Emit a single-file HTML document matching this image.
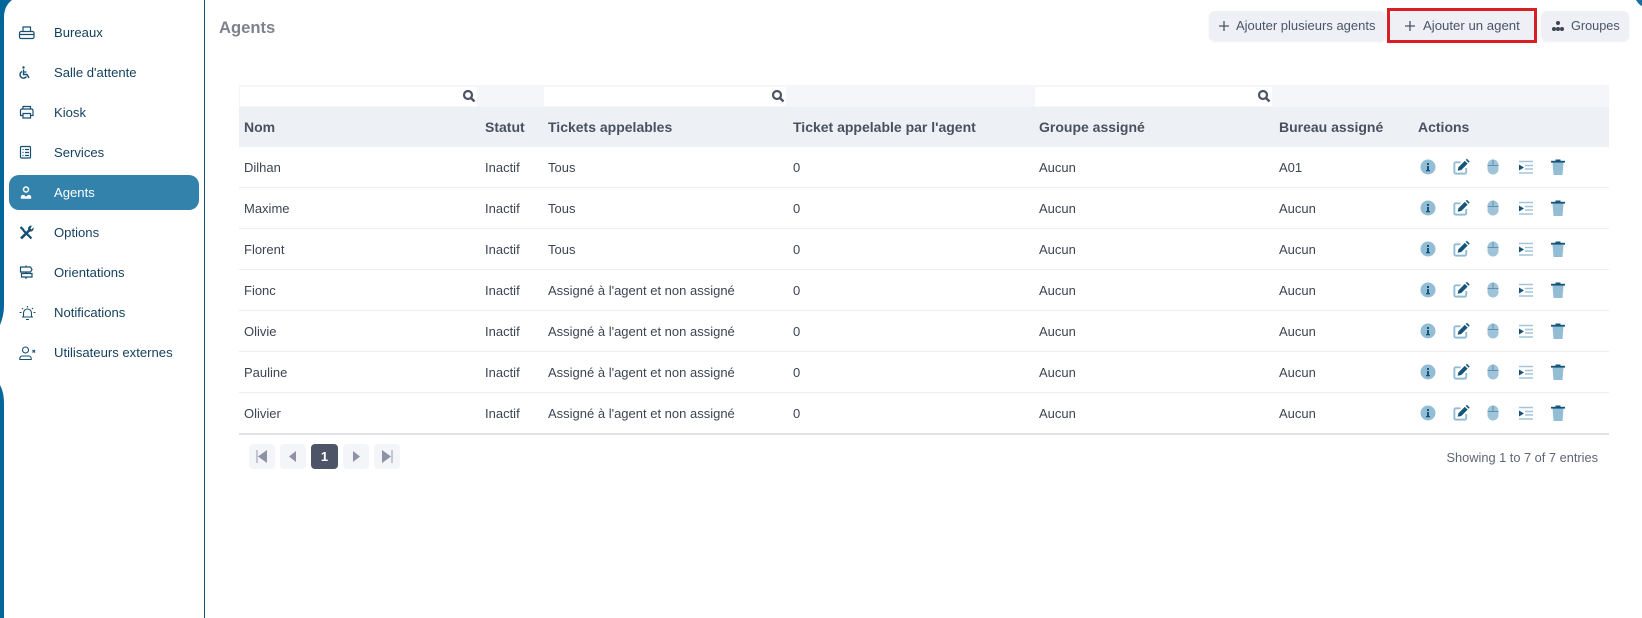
<!DOCTYPE html>
<html lang="fr">
<head>
<meta charset="utf-8">
<title>Agents</title>
<style>
html,body{margin:0;padding:0;background:#fff;}
body{width:1642px;height:618px;position:relative;overflow:hidden;font-family:"Liberation Sans",sans-serif;color:#33475b;}
.abs{position:absolute;}
.menu{position:absolute;left:54px;font-size:13.1px;line-height:16px;color:#123f5c;white-space:nowrap;}
.mi{position:absolute;left:18px;width:18px;height:18px;fill:none;stroke:#164f72;stroke-width:1.2;}
.btn{position:absolute;top:11px;height:30px;background:#eef0f5;border-radius:6px;font-size:13px;line-height:30px;color:#4b5468;white-space:nowrap;box-shadow:0 1px 2px rgba(60,70,90,.08);}
table{position:absolute;left:239px;top:107px;width:1370px;border-collapse:collapse;table-layout:fixed;font-size:13px;color:#3d4452;}
th{height:40px;background:#edf0f5;text-align:left;font-size:14px;font-weight:bold;color:#4a5060;padding:0 0 0 5px;white-space:nowrap;}
td{height:40px;border-bottom:1px solid #eceef1;padding:0 0 0 5px;white-space:nowrap;overflow:hidden;}
tr:last-child td{border-bottom:2px solid #dfe1e5;}
.ic{display:flex;gap:14.5px;align-items:center;padding-left:1px;height:22px;margin-top:-1px;}
.ic svg{width:18px;height:20px;flex:none;}
.pg{position:absolute;top:444px;width:26px;height:25px;background:#f4f5f9;border-radius:4px;}
.in{position:absolute;top:87px;height:19px;background:#fff;}
</style>
</head>
<body>
<svg width="0" height="0" style="position:absolute">
<defs>
<g id="i-info"><circle cx="9" cy="10" r="7.5" fill="#93bdd4"/><rect x="8" y="9" width="2" height="5" fill="#16557a"/><rect x="8" y="6" width="2" height="2" fill="#16557a"/><rect x="7" y="13" width="4" height="1.3" fill="#16557a"/></g>
<g id="i-edit"><path d="M9 5H4A1.500 1.500 0 0 0 2.500 6.500V15.500A1.500 1.500 0 0 0 4 17h9.500A1.500 1.500 0 0 0 15 15.500V11" fill="none" stroke="#93bdd4" stroke-width="2"/><path d="M6 14l.8-3.800L13.500 3.500l3 3L9.800 13.200z" fill="#16557a"/><path d="M14.500 2.500l1.200-1.200 3 3-1.200 1.200z" fill="#16557a"/></g>
<g id="i-mouse"><rect x="3.500" y="2.500" width="11" height="15" rx="5.500" fill="#9fc3d8"/><path d="M3.500 8.500h11M9 2.500v6" stroke="#5f93b2" stroke-width="1"/></g>
<g id="i-list"><path d="M2 4.500h14M8 8.500h8M8 12h8M2 16h14" stroke="#a3c6da" stroke-width="1.500"/><path d="M2 7.500l5 3-5 3z" fill="#16557a"/></g>
<g id="i-trash"><path d="M3.500 5.500h11l-1 12.500h-9z" fill="#93bdd4"/><rect x="2" y="3.800" width="14" height="1.800" fill="#16557a"/><rect x="6.500" y="2.500" width="5" height="1.500" fill="#16557a"/></g>
<g id="i-search"><circle cx="6" cy="6" r="4" fill="none" stroke="#4d5564" stroke-width="2.200"/><path d="M9 9l3.500 3.500" stroke="#4d5564" stroke-width="2.400"/></g>
</defs>
</svg>

<!-- left strip -->
<svg class="abs" style="left:0;top:0" width="14" height="420">
<path d="M0 0H12C7 4 4 9 4 18V305C4 314 2 320 0 325Z" fill="#04679c"/>
<path d="M0 385C3 391 4 396 4 405V420H0Z" fill="#04679c"/>
</svg>
<svg class="abs" style="left:0;top:420px" width="5" height="198"><rect width="4" height="198" fill="#04679c"/></svg>
<div class="abs" style="left:204px;top:0;width:1px;height:618px;background:#16506f"></div>
<svg class="abs" style="left:1630px;top:0" width="12" height="8"><path d="M6 0H12V6C9.500 5 8 3 6 0Z" fill="#1a6f9e"/></svg>

<!-- sidebar -->
<div class="abs" style="left:9px;top:175px;width:190px;height:35px;background:#3282ab;border-radius:10px"></div>

<svg class="mi" style="top:23px" viewBox="0 0 18 18"><path d="M5 8.500V4h7.500v4.500M1.500 11.500V10A1.500 1.500 0 0 1 3 8.500h11.500A1.500 1.500 0 0 1 16 10v1.500M1.500 11.500H16v2.500a1.500 1.500 0 0 1-1.500 1.500H3A1.500 1.500 0 0 1 1.500 14z"/></svg>
<div class="menu" style="top:25px">Bureaux</div>

<svg class="mi" style="top:63px" viewBox="0 0 18 18"><circle cx="5.500" cy="4.500" r="1.200" fill="#164f72" stroke="none"/><path d="M5.500 6.500v5h3.500l2 3.500M4 8.500a3.500 3.500 0 1 0 4.500 5" stroke-width="1.400"/><path d="M5.500 9h3" stroke-width="1.200"/></svg>
<div class="menu" style="top:65px">Salle d'attente</div>

<svg class="mi" style="top:103px" viewBox="0 0 18 18"><path d="M5 6V3.500h7.500V6M5 12.500H2.500V7.500A1.500 1.500 0 0 1 4 6h9.500A1.500 1.500 0 0 1 15 7.500v5h-2.500M5 10.500h7.500v4.500H5z"/></svg>
<div class="menu" style="top:105px">Kiosk</div>

<svg class="mi" style="top:143px" viewBox="0 0 18 18"><rect x="2.500" y="3.500" width="10" height="11.500" rx="1"/><path d="M4.500 6.500h1M7 6.500h4M4.500 9.500h1M7 9.500h4M4.500 12.500h1M7 12.500h4"/></svg>
<div class="menu" style="top:145px">Services</div>

<svg class="mi" style="top:184px;fill:#fff;stroke:#fff" viewBox="0 0 18 18"><circle cx="8" cy="5.500" r="2.500" fill="none" stroke-width="1.500"/><path d="M3 14.500v-1.500a1.800 1.800 0 0 1 1.800-1.800h1.200L8 13l2-1.800h1.200A1.800 1.800 0 0 1 13 13v1.500z" stroke-width=".5"/></svg>
<div class="menu" style="top:185px;color:#fff">Agents</div>

<svg class="mi" style="top:224px" viewBox="0 0 18 18"><path d="M2.500 3l2.500 2.500 1 1.500 7.500 7.500" stroke-width="2.200"/><path d="M13.500 2a2.800 2.800 0 0 0-3 3.800L2.500 13.500l1.500 1.500 7.800-7.800a2.800 2.800 0 0 0 3.500-3.200L13.500 6 12 4.500z" fill="#164f72" stroke-width=".6"/></svg>
<div class="menu" style="top:225px">Options</div>

<svg class="mi" style="top:264px" viewBox="0 0 18 18"><path d="M8 1.500V3M8 8v1.500M8 13v2M2.500 3h10l1.500 2.500L12.500 8h-10zM3.500 9.500h10.500V13H3.500z" stroke-width="1.200"/></svg>
<div class="menu" style="top:265px">Orientations</div>

<svg class="mi" style="top:304px;left:18px;width:19px" viewBox="0 0 19 18"><path d="M5.500 13V9a4 4 0 0 1 8 0v4M4 13h11M8 15.500h3M9.500 2v1.500M4 4l1 1M15 4l-1 1M1.500 8.500h2M15.500 8.500h2" stroke-width="1.100"/></svg>
<div class="menu" style="top:305px">Notifications</div>

<svg class="mi" style="top:344px;width:19px" viewBox="0 0 19 18"><circle cx="7.500" cy="6" r="3" stroke-width="1.100"/><path d="M1.800 15.500v-1a2.500 2.500 0 0 1 2.500-2.500h6.400a2.500 2.500 0 0 1 2.500 2.500v1z" stroke-width="1.100"/><path d="M14.500 6l2.500 2.500M17 6l-2.500 2.500" stroke-width="1.200"/></svg>
<div class="menu" style="top:345px">Utilisateurs externes</div>

<!-- header -->
<div class="abs" style="left:219px;top:17px;font-size:16.6px;line-height:21px;font-weight:bold;color:#7d828c">Agents</div>

<div class="btn" style="left:1209px;width:177px"><svg class="abs" style="left:9px;top:9px" width="12" height="12"><path d="M6 1v10M1 6h10" stroke="#4b5468" stroke-width="1.300"/></svg><span class="abs" style="left:27px">Ajouter plusieurs agents</span></div>
<div class="btn" style="left:1390px;width:144px"><svg class="abs" style="left:14px;top:9px" width="12" height="12"><path d="M6 1v10M1 6h10" stroke="#4b5468" stroke-width="1.300"/></svg><span class="abs" style="left:33px;font-size:13.2px">Ajouter un agent</span></div>
<div class="abs" style="left:1387px;top:8px;width:144px;height:29px;border:3px solid #d81f26"></div>
<div class="btn" style="left:1541px;width:88px"><svg class="abs" style="left:10px;top:8px" width="14" height="14" viewBox="0 0 14 14" fill="#3d4452"><circle cx="7" cy="4" r="2"/><circle cx="3" cy="10" r="2"/><circle cx="7" cy="10" r="2"/><circle cx="11" cy="10" r="2"/></svg><span class="abs" style="left:30px;font-size:12.7px">Groupes</span></div>

<!-- search row -->
<div class="abs" style="left:239px;top:85px;width:1370px;height:22px;background:#f5f6f9"></div>
<div class="in" style="left:240px;width:237px"></div>
<div class="in" style="left:544px;width:242px"></div>
<div class="in" style="left:1035px;width:237px"></div>
<svg class="abs" style="left:462px;top:89px" width="14" height="14"><use href="#i-search"/></svg>
<svg class="abs" style="left:771px;top:89px" width="14" height="14"><use href="#i-search"/></svg>
<svg class="abs" style="left:1257px;top:89px" width="14" height="14"><use href="#i-search"/></svg>

<table>
<colgroup><col style="width:241px"><col style="width:63px"><col style="width:245px"><col style="width:246px"><col style="width:240px"><col style="width:139px"><col style="width:196px"></colgroup>
<thead><tr><th>Nom</th><th>Statut</th><th>Tickets appelables</th><th>Ticket appelable par l'agent</th><th>Groupe assigné</th><th>Bureau assigné</th><th>Actions</th></tr></thead>
<tbody>
<tr><td>Dilhan</td><td>Inactif</td><td>Tous</td><td>0</td><td>Aucun</td><td>A01</td><td><div class="ic"><svg viewBox="0 0 18 20"><use href="#i-info"/></svg><svg viewBox="0 0 19 20"><use href="#i-edit"/></svg><svg viewBox="0 0 18 20"><use href="#i-mouse"/></svg><svg viewBox="0 0 18 20"><use href="#i-list"/></svg><svg viewBox="0 0 18 20"><use href="#i-trash"/></svg></div></td></tr>
<tr><td>Maxime</td><td>Inactif</td><td>Tous</td><td>0</td><td>Aucun</td><td>Aucun</td><td><div class="ic"><svg viewBox="0 0 18 20"><use href="#i-info"/></svg><svg viewBox="0 0 19 20"><use href="#i-edit"/></svg><svg viewBox="0 0 18 20"><use href="#i-mouse"/></svg><svg viewBox="0 0 18 20"><use href="#i-list"/></svg><svg viewBox="0 0 18 20"><use href="#i-trash"/></svg></div></td></tr>
<tr><td>Florent</td><td>Inactif</td><td>Tous</td><td>0</td><td>Aucun</td><td>Aucun</td><td><div class="ic"><svg viewBox="0 0 18 20"><use href="#i-info"/></svg><svg viewBox="0 0 19 20"><use href="#i-edit"/></svg><svg viewBox="0 0 18 20"><use href="#i-mouse"/></svg><svg viewBox="0 0 18 20"><use href="#i-list"/></svg><svg viewBox="0 0 18 20"><use href="#i-trash"/></svg></div></td></tr>
<tr><td>Fionc</td><td>Inactif</td><td>Assigné à l'agent et non assigné</td><td>0</td><td>Aucun</td><td>Aucun</td><td><div class="ic"><svg viewBox="0 0 18 20"><use href="#i-info"/></svg><svg viewBox="0 0 19 20"><use href="#i-edit"/></svg><svg viewBox="0 0 18 20"><use href="#i-mouse"/></svg><svg viewBox="0 0 18 20"><use href="#i-list"/></svg><svg viewBox="0 0 18 20"><use href="#i-trash"/></svg></div></td></tr>
<tr><td>Olivie</td><td>Inactif</td><td>Assigné à l'agent et non assigné</td><td>0</td><td>Aucun</td><td>Aucun</td><td><div class="ic"><svg viewBox="0 0 18 20"><use href="#i-info"/></svg><svg viewBox="0 0 19 20"><use href="#i-edit"/></svg><svg viewBox="0 0 18 20"><use href="#i-mouse"/></svg><svg viewBox="0 0 18 20"><use href="#i-list"/></svg><svg viewBox="0 0 18 20"><use href="#i-trash"/></svg></div></td></tr>
<tr><td>Pauline</td><td>Inactif</td><td>Assigné à l'agent et non assigné</td><td>0</td><td>Aucun</td><td>Aucun</td><td><div class="ic"><svg viewBox="0 0 18 20"><use href="#i-info"/></svg><svg viewBox="0 0 19 20"><use href="#i-edit"/></svg><svg viewBox="0 0 18 20"><use href="#i-mouse"/></svg><svg viewBox="0 0 18 20"><use href="#i-list"/></svg><svg viewBox="0 0 18 20"><use href="#i-trash"/></svg></div></td></tr>
<tr><td>Olivier</td><td>Inactif</td><td>Assigné à l'agent et non assigné</td><td>0</td><td>Aucun</td><td>Aucun</td><td><div class="ic"><svg viewBox="0 0 18 20"><use href="#i-info"/></svg><svg viewBox="0 0 19 20"><use href="#i-edit"/></svg><svg viewBox="0 0 18 20"><use href="#i-mouse"/></svg><svg viewBox="0 0 18 20"><use href="#i-list"/></svg><svg viewBox="0 0 18 20"><use href="#i-trash"/></svg></div></td></tr>
</tbody>
</table>

<!-- pagination -->
<div class="pg" style="left:249px"><svg width="26" height="25"><rect x="7" y="6" width="2" height="13" fill="#c3c7d1"/><path d="M18 6v13l-9-6.500z" fill="#8d93a5"/></svg></div>
<div class="pg" style="left:280px"><svg width="26" height="25"><path d="M16 7v11l-7-5.500z" fill="#8d93a5"/></svg></div>
<div class="pg" style="left:311px;width:27px;background:#4d5468;color:#fff;font-weight:bold;font-size:13px;line-height:25px;text-align:center">1</div>
<div class="pg" style="left:343px"><svg width="26" height="25"><path d="M10 7v11l7-5.500z" fill="#8d93a5"/></svg></div>
<div class="pg" style="left:374px"><svg width="26" height="25"><path d="M8 6v13l9-6.500z" fill="#8d93a5"/><rect x="17" y="6" width="2" height="13" fill="#c3c7d1"/></svg></div>
<div class="abs" style="right:44px;top:450px;font-size:12.8px;line-height:15px;color:#5f6673;white-space:nowrap">Showing 1 to 7 of 7 entries</div>
</body>
</html>
